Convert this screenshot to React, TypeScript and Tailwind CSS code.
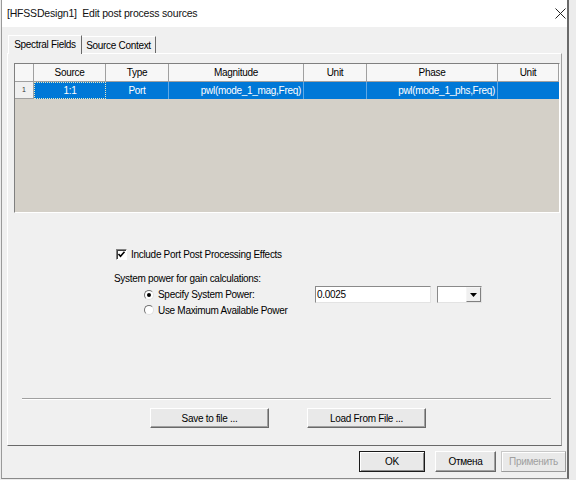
import React from "react";

const columns = [
  { label: "", w: "w-[19px]" },
  { label: "Source", w: "w-[72px]" },
  { label: "Type", w: "w-[63px]" },
  { label: "Magnitude", w: "w-[135px]" },
  { label: "Unit", w: "w-[63px]" },
  { label: "Phase", w: "w-[131px]" },
  { label: "Unit", w: "w-[61px]" },
];

function Button({
  children,
  className = "",
  isDefault = false,
  disabled = false,
}: {
  children: React.ReactNode;
  className?: string;
  isDefault?: boolean;
  disabled?: boolean;
}) {
  return (
    <div
      className={
        "flex items-center justify-center border bg-[#e9e9e9] " +
        (isDefault
          ? "border-[#1a1a1a] shadow-[inset_1px_1px_0_#ffffff,inset_-1px_-1px_0_#8a8a8a]"
          : disabled
            ? "border-[#c8c8c8] border-b-[#9a9a9a] border-r-[#9a9a9a] shadow-[inset_1px_1px_0_#ffffff]"
            : "border-[#ffffff] border-b-[#696969] border-r-[#696969] shadow-[inset_-1px_-1px_0_#a0a0a0]") +
        (disabled ? " text-[#a0a0a0]" : " text-black") +
        " " +
        className
      }
    >
      {children}
    </div>
  );
}

function Checkbox() {
  return (
    <div className="flex h-[11px] w-[11px] items-center justify-center border border-t-[#808080] border-l-[#808080] border-r-white border-b-white bg-white shadow-[inset_1px_1px_0_#404040]">
      <svg width="9" height="9" viewBox="0 0 9 9">
        <path d="M1.5 4 L3.5 6.2 L7.5 1.8" fill="none" stroke="#000" strokeWidth="1.6" />
      </svg>
    </div>
  );
}

function Radio({ checked }: { checked?: boolean }) {
  return (
    <div className="flex h-[10px] w-[10px] items-center justify-center rounded-full border border-t-[#707070] border-l-[#707070] border-r-[#e0e0e0] border-b-[#e0e0e0] bg-white">
      {checked && <div className="h-[4px] w-[4px] rounded-full bg-black" />}
    </div>
  );
}

export default function App() {
  return (
    <div className="flex h-[480px] w-[576px] overflow-hidden bg-[#ececec] font-['Liberation_Sans',Arial,sans-serif] text-[10px] tracking-[-0.3px] text-black">
      <div className="ml-[1px] flex h-[479px] w-[568px] flex-col border-b border-l border-r-2 border-b-[#8a8a8a] border-l-[#9a9a9a] border-r-[#6a6a6a] bg-[#f0f0f0]">
        {/* title bar */}
        <div className="flex h-[27px] shrink-0 items-center justify-between bg-white pl-[5px] pr-[1px]">
          <span className="whitespace-pre text-[10.5px] tracking-[-0.2px] text-[#111]">
            [HFSSDesign1]  Edit post process sources
          </span>
          <svg width="11" height="11" viewBox="0 0 11 11" className="mb-[1px]">
            <path d="M0.5 0.5 L10.5 10.5 M10.5 0.5 L0.5 10.5" stroke="#222" strokeWidth="1" />
          </svg>
        </div>

        {/* tabs */}
        <div className="mt-[7px] flex h-[19px] items-end pl-[6px]">
          <div className="relative z-10 -mb-px flex h-[19px] w-[74px] items-center justify-center border-l border-t border-r border-l-white border-t-white border-r-[#696969] bg-[#f0f0f0] pb-[1px]">
            Spectral Fields
          </div>
          <div className="flex h-[17px] w-[74px] items-center justify-center border-r border-t border-r-[#696969] border-t-white">
            Source Context
          </div>
        </div>

        {/* tab panel */}
        <div className="ml-[5px] flex h-[393px] w-[555px] flex-col border border-l-white border-t-white border-r-[#a0a0a0] border-b-[#696969]">
          {/* grid */}
          <div className="ml-[6px] mt-[9px] flex h-[150px] w-[546px] flex-col border border-l-[#808080] border-t-[#808080] border-r-white border-b-white bg-[#d4d0c8]">
            <div className="flex h-[18px] border-b border-[#a0a0a0] bg-[#f7f7f7]">
              {columns.map((c, i) => (
                <div
                  key={i}
                  className={`${c.w} flex items-center justify-center border-r border-[#a0a0a0]`}
                >
                  {c.label}
                </div>
              ))}
            </div>
            <div className="flex h-[17px] text-white">
              <div className="flex w-[19px] items-center border-r border-b border-[#a0a0a0] bg-[#f0f0f0] pl-[7px] text-[7px] text-[#333]">
                1
              </div>
              <div className="flex w-[72px] items-center justify-center border border-dotted border-[#e8e8c0] bg-[#0078d7]">
                1:1
              </div>
              <div className="flex w-[63px] items-center justify-center border-r border-[#5fa8e6] bg-[#0078d7]">
                Port
              </div>
              <div className="flex w-[135px] items-center justify-end border-r border-[#5fa8e6] bg-[#0078d7] pr-[2px]">
                pwl(mode_1_mag,Freq)
              </div>
              <div className="w-[63px] border-r border-[#5fa8e6] bg-[#0078d7]" />
              <div className="flex w-[131px] items-center justify-end border-r border-[#5fa8e6] bg-[#0078d7] pr-[2px]">
                pwl(mode_1_phs,Freq)
              </div>
              <div className="w-[61px] bg-[#0078d7]" />
            </div>
          </div>

          {/* options */}
          <div className="ml-[108px] mt-[34px] flex h-[14px] items-center gap-[4px]">
            <Checkbox />
            <span>Include Port Post Processing Effects</span>
          </div>
          <div className="ml-[106px] mt-[10px] flex h-[14px] items-center">
            System power for gain calculations:
          </div>
          <div className="ml-[136px] mt-[1px] flex h-[17px] items-center">
            <div className="flex w-[171px] items-center gap-[4px]">
              <Radio checked />
              <span>Specify System Power:</span>
            </div>
            <div className="flex h-[17px] w-[116px] items-center border border-l-[#8a8a8a] border-t-[#8a8a8a] border-r-[#e3e3e3] border-b-[#e3e3e3] bg-white pl-[1px]">
              0.0025
            </div>
            <div className="ml-[6px] flex h-[17px] w-[45px] items-stretch border border-l-[#8a8a8a] border-t-[#8a8a8a] border-r-[#e3e3e3] border-b-[#e3e3e3] bg-white">
              <div className="flex-1" />
              <div className="flex w-[15px] items-center justify-center border border-l-[#f5f5f5] border-t-[#f5f5f5] border-r-[#808080] border-b-[#808080] bg-[#f0f0f0]">
                <svg width="7" height="4" viewBox="0 0 7 4">
                  <path d="M0 0 H7 L3.5 4 Z" fill="#000" />
                </svg>
              </div>
            </div>
          </div>
          <div className="ml-[136px] flex h-[14px] items-center gap-[4px]">
            <Radio />
            <span>Use Maximum Available Power</span>
          </div>

          {/* separator */}
          <div className="ml-[14px] mt-[81px] h-[2px] w-[529px] border-t border-b border-t-[#a0a0a0] border-b-white" />

          <div className="ml-[142px] mt-[8px] flex h-[20px] gap-[38px]">
            <Button className="w-[119px]">Save to file ...</Button>
            <Button className="w-[119px]">Load From File ...</Button>
          </div>
        </div>

        {/* dialog buttons */}
        <div className="mt-[5px] flex h-[21px] justify-end pr-[1px]">
          <Button isDefault className="w-[66px]">OK</Button>
          <Button className="ml-[10px] w-[61px]">Отмена</Button>
          <Button disabled className="ml-[5px] w-[65px]">Применить</Button>
        </div>
      </div>
    </div>
  );
}
